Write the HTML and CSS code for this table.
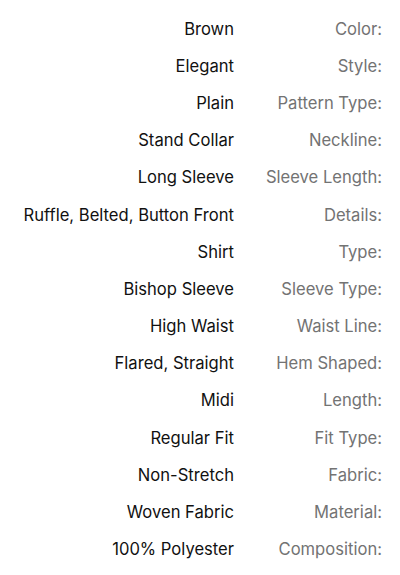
FILE: index.html
```html
<!DOCTYPE html>
<html lang="en">

<head>
    <meta charset="UTF-8">
    <meta name="viewport" content="width=device-width, initial-scale=1.0">
    <title>Product Details</title>
    <link rel="stylesheet" href="styles.css">
</head>

<body>
    <main class="attrs">
        <div class="attr-row"><span class="attr-value">Brown</span><span class="attr-label">Color:</span></div>
        <div class="attr-row"><span class="attr-value">Elegant</span><span class="attr-label">Style:</span></div>
        <div class="attr-row"><span class="attr-value">Plain</span><span class="attr-label">Pattern Type:</span></div>
        <div class="attr-row"><span class="attr-value">Stand Collar</span><span class="attr-label">Neckline:</span></div>
        <div class="attr-row"><span class="attr-value">Long Sleeve</span><span class="attr-label">Sleeve Length:</span></div>
        <div class="attr-row"><span class="attr-value">Ruffle, Belted, Button Front</span><span class="attr-label">Details:</span></div>
        <div class="attr-row"><span class="attr-value">Shirt</span><span class="attr-label">Type:</span></div>
        <div class="attr-row"><span class="attr-value">Bishop Sleeve</span><span class="attr-label">Sleeve Type:</span></div>
        <div class="attr-row"><span class="attr-value">High Waist</span><span class="attr-label">Waist Line:</span></div>
        <div class="attr-row"><span class="attr-value">Flared, Straight</span><span class="attr-label">Hem Shaped:</span></div>
        <div class="attr-row"><span class="attr-value">Midi</span><span class="attr-label">Length:</span></div>
        <div class="attr-row"><span class="attr-value">Regular Fit</span><span class="attr-label">Fit Type:</span></div>
        <div class="attr-row"><span class="attr-value">Non-Stretch</span><span class="attr-label">Fabric:</span></div>
        <div class="attr-row"><span class="attr-value">Woven Fabric</span><span class="attr-label">Material:</span></div>
        <div class="attr-row"><span class="attr-value">100% Polyester</span><span class="attr-label">Composition:</span></div>
    </main>
</body>

</html>
```

FILE: styles.css
```css
body {
    font-family: Inter, "Noto Sans", sans-serif;
    background-color: #fff;
    color: #111;
    margin: 0;
    padding: 0;
}

.attrs {
    padding: 10px 18px 0 0;
}

.attr-row {
    display: grid;
    grid-template-columns: 234px 1fr;
    height: 37.2px;
    align-items: center;
    font-size: 16.6px;
    line-height: 20px;
}

.attr-value {
    text-align: right;
    color: #111;
    white-space: nowrap;
}

.attr-label {
    text-align: right;
    color: #737373;
    white-space: nowrap;
}
```
